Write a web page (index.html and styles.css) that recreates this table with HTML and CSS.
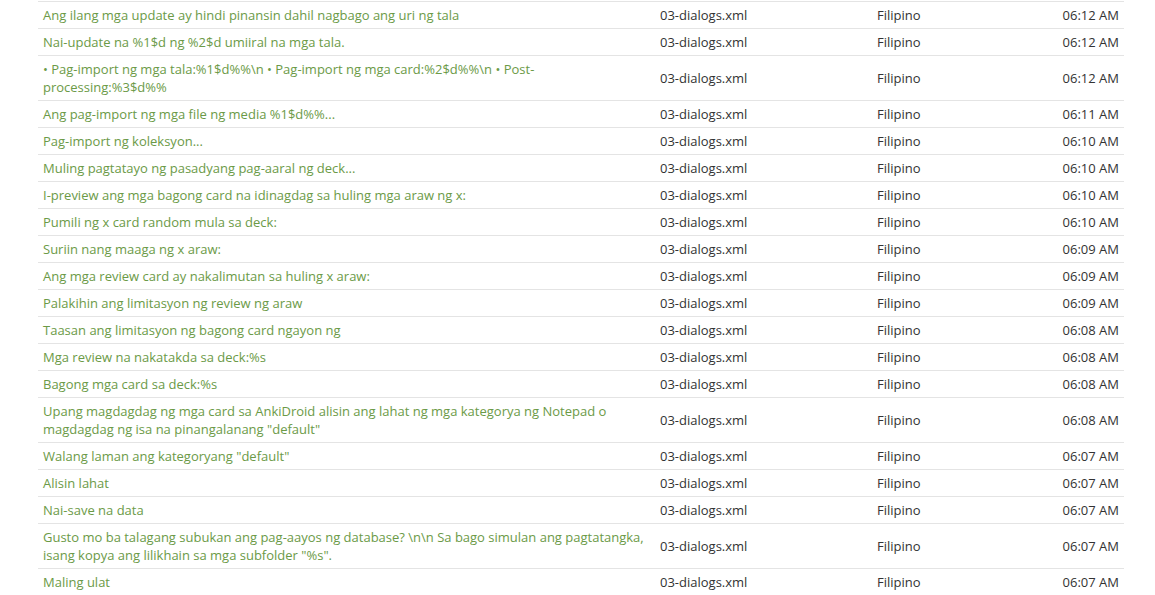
FILE: index.html
```html
<!DOCTYPE html>
<html>
<head>
<meta charset="utf-8">
<link rel="stylesheet" href="styles.css">
</head>
<body>
<div class="wrap">
<table class="log">
<colgroup><col class="c-text"><col class="c-file"><col class="c-lang"><col class="c-time"></colgroup>
<tbody>
<tr><td class="t">Ang ilang mga update ay hindi pinansin dahil nagbago ang uri ng tala</td><td>03-dialogs.xml</td><td>Filipino</td><td class="tm">06:12 AM</td></tr>
<tr><td class="t">Nai-update na %1$d ng %2$d umiiral na mga tala.</td><td>03-dialogs.xml</td><td>Filipino</td><td class="tm">06:12 AM</td></tr>
<tr><td class="t">• Pag-import ng mga tala:%1$d%%\n • Pag-import ng mga card:%2$d%%\n • Post-processing:%3$d%%</td><td>03-dialogs.xml</td><td>Filipino</td><td class="tm">06:12 AM</td></tr>
<tr><td class="t">Ang pag-import ng mga file ng media %1$d%%...</td><td>03-dialogs.xml</td><td>Filipino</td><td class="tm">06:11 AM</td></tr>
<tr><td class="t">Pag-import ng koleksyon...</td><td>03-dialogs.xml</td><td>Filipino</td><td class="tm">06:10 AM</td></tr>
<tr><td class="t">Muling pagtatayo ng pasadyang pag-aaral ng deck...</td><td>03-dialogs.xml</td><td>Filipino</td><td class="tm">06:10 AM</td></tr>
<tr><td class="t">I-preview ang mga bagong card na idinagdag sa huling mga araw ng x:</td><td>03-dialogs.xml</td><td>Filipino</td><td class="tm">06:10 AM</td></tr>
<tr><td class="t">Pumili ng x card random mula sa deck:</td><td>03-dialogs.xml</td><td>Filipino</td><td class="tm">06:10 AM</td></tr>
<tr><td class="t">Suriin nang maaga ng x araw:</td><td>03-dialogs.xml</td><td>Filipino</td><td class="tm">06:09 AM</td></tr>
<tr><td class="t">Ang mga review card ay nakalimutan sa huling x araw:</td><td>03-dialogs.xml</td><td>Filipino</td><td class="tm">06:09 AM</td></tr>
<tr><td class="t">Palakihin ang limitasyon ng review ng araw</td><td>03-dialogs.xml</td><td>Filipino</td><td class="tm">06:09 AM</td></tr>
<tr><td class="t">Taasan ang limitasyon ng bagong card ngayon ng</td><td>03-dialogs.xml</td><td>Filipino</td><td class="tm">06:08 AM</td></tr>
<tr><td class="t">Mga review na nakatakda sa deck:%s</td><td>03-dialogs.xml</td><td>Filipino</td><td class="tm">06:08 AM</td></tr>
<tr><td class="t">Bagong mga card sa deck:%s</td><td>03-dialogs.xml</td><td>Filipino</td><td class="tm">06:08 AM</td></tr>
<tr><td class="t">Upang magdagdag ng mga card sa AnkiDroid alisin ang lahat ng mga kategorya ng Notepad o magdagdag ng isa na pinangalanang "default"</td><td>03-dialogs.xml</td><td>Filipino</td><td class="tm">06:08 AM</td></tr>
<tr><td class="t">Walang laman ang kategoryang "default"</td><td>03-dialogs.xml</td><td>Filipino</td><td class="tm">06:07 AM</td></tr>
<tr><td class="t">Alisin lahat</td><td>03-dialogs.xml</td><td>Filipino</td><td class="tm">06:07 AM</td></tr>
<tr><td class="t">Nai-save na data</td><td>03-dialogs.xml</td><td>Filipino</td><td class="tm">06:07 AM</td></tr>
<tr><td class="t">Gusto mo ba talagang subukan ang pag-aayos ng database? \n\n Sa bago simulan ang pagtatangka, isang kopya ang lilikhain sa mga subfolder "%s".</td><td>03-dialogs.xml</td><td>Filipino</td><td class="tm">06:07 AM</td></tr>
<tr><td class="t">Maling ulat</td><td>03-dialogs.xml</td><td>Filipino</td><td class="tm">06:07 AM</td></tr>
</tbody>
</table>
</div>
</body>
</html>
```

FILE: styles.css
```css
html, body {
  margin: 0;
  padding: 0;
  background: #fff;
}
.wrap {
  padding: 1px 31px 0 38px;
}
.log {
  width: 1086px;
  border-collapse: collapse;
  table-layout: fixed;
  font-family: "Open Sans", "Noto Sans", sans-serif;
  font-size: 13px;
  line-height: 18px;
  color: #333;
}
.c-text { width: 617px; }
.c-file { width: 217px; }
.c-lang { width: 150px; }
.c-time { width: 102px; }
.log td {
  padding: 4px 5px;
  border-top: 1px solid #e4e4e4;
  vertical-align: middle;
}
.log td.t {
  color: #6b9a47;
}
.log td.tm {
  text-align: right;
}
```
